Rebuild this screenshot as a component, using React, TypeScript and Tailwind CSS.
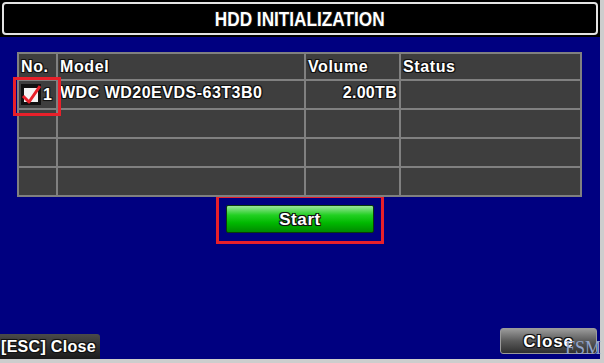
import React from "react";

const outline =
  "[text-shadow:-1px_-1px_0_#111,1px_-1px_0_#111,-1px_1px_0_#111,1px_1px_0_#111,0_0_2px_#000]";

type Row = { no?: string; checked?: boolean; model?: string; volume?: string; status?: string };

const rows: Row[] = [
  { no: "1", checked: true, model: "WDC WD20EVDS-63T3B0", volume: "2.00TB", status: "" },
  {},
  {},
  {},
];

// red tick in a white box
function CheckMark() {
  return (
    <svg width="20" height="21" viewBox="0 0 20 21" className="shrink-0">
      <rect x="0" y="0" width="20" height="21" fill="#111" />
      <rect x="3" y="4" width="14" height="14" fill="#f4f4f4" />
      <path d="M2 12 L8 18 L19 2" stroke="#e8202a" strokeWidth="3" fill="none" strokeLinejoin="round" />
    </svg>
  );
}

export default function App() {
  return (
    <div className="w-[604px] h-[363px] bg-[#cdcdcd] overflow-hidden relative font-['Liberation_Sans',Arial,sans-serif]">
      <div className="w-[600px] h-[359px] flex flex-col bg-[#000080]">
        {/* Title bar */}
        <div className="h-[37px] bg-black pt-[2px] px-[2px] pb-[2px]">
          <div className="h-full rounded-[4px] border-2 border-[#e4e4e4] flex items-center justify-center">
            <span className={`inline-block scale-x-[0.86] text-white font-bold text-[20px] leading-none ${outline}`}>
              HDD INITIALIZATION
            </span>
          </div>
        </div>

        {/* Disk table */}
        <div className="relative mt-[15px] ml-[17px] w-[565px] bg-[#808080] p-[2px] grid grid-cols-[37px_246px_93px_179px] gap-[2px]">
          {["No.", "Model", "Volume", "Status"].map((h) => (
            <div
              key={h}
              className={`h-[25px] bg-[#3e3e3e] flex items-center pl-[2px] text-white font-bold text-[16px] leading-none tracking-[0.6px] ${outline}`}
            >
              {h}
            </div>
          ))}
          {rows.map((r, i) => (
            <React.Fragment key={i}>
              <div className="h-[27px] bg-[#3e3e3e] flex items-center pl-[2px] gap-[2px]">
                {r.checked && <CheckMark />}
                {r.no && <span className={`text-white font-bold text-[16px] leading-none ${outline}`}>{r.no}</span>}
              </div>
              <div className={`h-[27px] bg-[#3e3e3e] flex items-center pl-[2px] pb-[3px] text-white font-bold text-[16px] leading-none tracking-[0.5px] ${outline}`}>
                {r.model}
              </div>
              <div className={`h-[27px] bg-[#3e3e3e] flex items-center justify-end pr-[2px] pb-[3px] text-white font-bold text-[16px] leading-none tracking-[0.3px] ${outline}`}>
                {r.volume}
              </div>
              <div className="h-[27px] bg-[#3e3e3e]">{r.status}</div>
            </React.Fragment>
          ))}
          {/* highlight around the selected disk */}
          <div className="absolute left-[-4px] top-[25px] w-[48px] h-[39px] border-[3px] border-[#e8202a]" />
        </div>

        {/* Start button, highlighted */}
        <div className="flex justify-center -mt-[2px]">
          <div className="border-[3px] border-[#e8202a] pt-[7px] pb-[8px] px-[7px]">
            <div className="w-[148px] h-[28px] rounded-[2px] border border-[#0a3a0a] bg-[linear-gradient(#9be49b_0%,#22d022_35%,#00b800_65%,#008a00_100%)] flex items-center justify-center">
              <span className={`text-white font-bold text-[17px] leading-none tracking-[0.6px] ${outline}`}>Start</span>
            </div>
          </div>
        </div>

        {/* Footer */}
        <div className="mt-auto flex items-end justify-between">
          <div className={`w-[100px] h-[25px] rounded-tr-[3px] bg-[linear-gradient(#4a4a4a,#1a1a1a)] flex items-center pl-[1px] whitespace-nowrap text-white font-bold text-[16px] leading-none tracking-[0.3px] ${outline}`}>
            [ESC] Close
          </div>
          <div className="w-[97px] h-[26px] mb-[5px] mr-[3px] rounded-[3px] border border-[#9a9a9a] bg-[linear-gradient(#9a9a9a,#5a5a5a_50%,#303030)] flex items-center justify-center">
            <span className={`text-white font-bold text-[17px] leading-none tracking-[0.8px] ${outline}`}>Close</span>
          </div>
        </div>
      </div>

      {/* watermark */}
      <span className="absolute right-[3px] bottom-[6px] text-[18px] leading-none text-[#93a5cc] font-['Liberation_Serif',serif]">
        FSM
      </span>
    </div>
  );
}
